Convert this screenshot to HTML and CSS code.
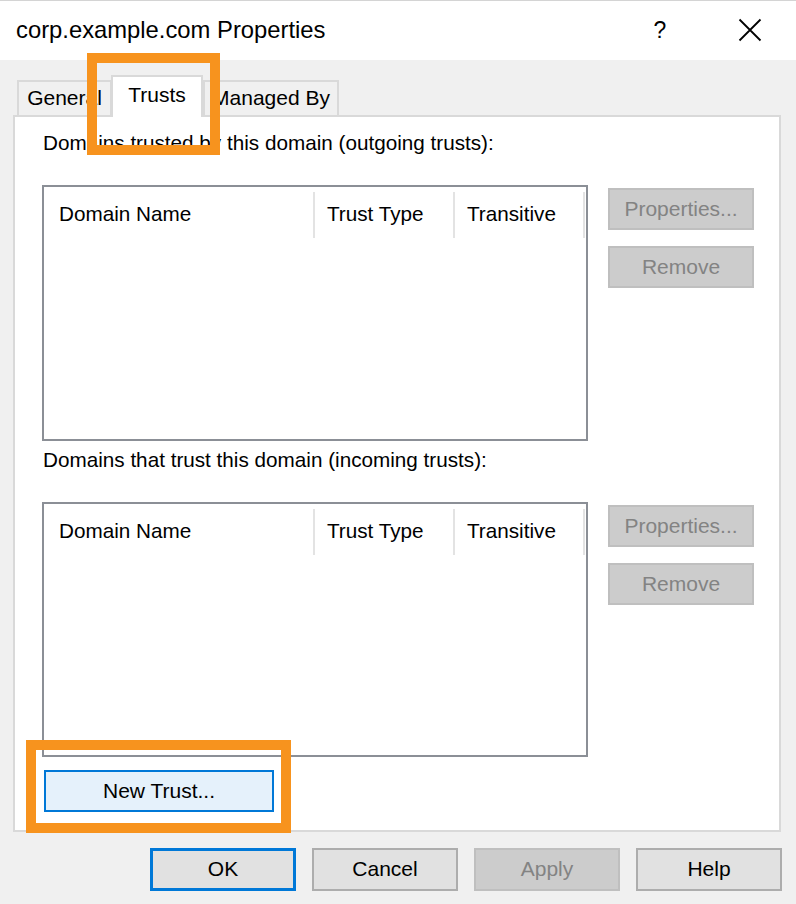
FILE: index.html
```html
<!DOCTYPE html>
<html lang="en">
<head>
<meta charset="utf-8">
<title>corp.example.com Properties</title>
<link rel="stylesheet" href="styles.css">
</head>
<body>
<div class="window">
  <header class="titlebar">
    <span class="title">corp.example.com Properties</span>
    <span class="help">?</span>
    <span class="close">
      <svg width="24" height="24" viewBox="0 0 24 24"><path d="M1.5 1.5 L22.5 22.5 M22.5 1.5 L1.5 22.5" stroke="#000" stroke-width="1.8" fill="none"/></svg>
    </span>
  </header>

  <div class="tabs">
    <div class="tab tab-general">General</div>
    <div class="tab tab-trusts active">Trusts</div>
    <div class="tab tab-managed">Managed By</div>
  </div>

  <section class="panel">
    <p class="label">Domains trusted by this domain (outgoing trusts):</p>
    <div class="list-row">
      <div class="listbox">
        <div class="list-header">
          <div class="col col-name">Domain Name</div>
          <div class="col col-type">Trust Type</div>
          <div class="col col-trans">Transitive</div>
        </div>
      </div>
      <div class="side-buttons">
        <button class="btn disabled">Properties...</button>
        <button class="btn disabled">Remove</button>
      </div>
    </div>

    <p class="label label-2">Domains that trust this domain (incoming trusts):</p>
    <div class="list-row list-row-2">
      <div class="listbox listbox-2">
        <div class="list-header">
          <div class="col col-name">Domain Name</div>
          <div class="col col-type">Trust Type</div>
          <div class="col col-trans">Transitive</div>
        </div>
      </div>
      <div class="side-buttons side-buttons-2">
        <button class="btn disabled">Properties...</button>
        <button class="btn disabled">Remove</button>
      </div>
    </div>

    <button class="btn new-trust">New Trust...</button>
  </section>

  <footer class="footer">
    <button class="btn default">OK</button>
    <button class="btn">Cancel</button>
    <button class="btn disabled">Apply</button>
    <button class="btn">Help</button>
  </footer>

  <div class="highlight hl-tab"></div>
  <div class="highlight hl-new"></div>
</div>
</body>
</html>
```

FILE: styles.css
```css
* { box-sizing: border-box; }

html, body {
  margin: 0;
  padding: 0;
}

body {
  width: 796px;
  height: 904px;
  background: #f0f0f0;
  font-family: "Liberation Sans", Arial, sans-serif;
  color: #000;
  overflow: hidden;
}

.window {
  position: relative;
  width: 796px;
  height: 904px;
  background: #f0f0f0;
}

.titlebar {
  height: 60px;
  background: #fff;
  border-top: 1px solid #d4d4d4;
  display: flex;
  align-items: center;
  padding-left: 16px;
  padding-bottom: 1px;
}

.title {
  font-size: 23.8px;
  flex: 1;
}

.help {
  font-size: 23px;
  width: 20px;
  margin-right: 68px;
  text-align: center;
}

.close {
  display: flex;
  width: 24px;
  height: 24px;
  margin-right: 34px;
}

.tabs {
  display: flex;
  align-items: flex-end;
  height: 57px;
  padding-left: 17px;
  position: relative;
  z-index: 2;
  margin-bottom: -2px;
}

.tab {
  font-size: 21px;
  display: flex;
  align-items: center;
  justify-content: center;
  border: 2px solid #d9d9d9;
  border-bottom: none;
  background: #f0f0f0;
  height: 35px;
  margin-bottom: 2px;
  padding-bottom: 1px;
}

.tab-general { width: 95px; }
.tab-managed { width: 136px; }

.tab-trusts {
  width: 92px;
  height: 42px;
  margin-left: -1px;
  margin-bottom: 0;
  background: #fff;
  padding-bottom: 4px;
  position: relative;
  z-index: 3;
}

.panel {
  position: relative;
  z-index: 1;
  margin-left: 13px;
  width: 768px;
  height: 717px;
  background: #fff;
  border: 2px solid #d9d9d9;
  padding: 14px 0 0 27px;
}

.label {
  margin: 0 0 0 1px;
  font-size: 20.7px;
  line-height: 24px;
  height: 24px;
}

.label-2 {
  margin-top: 7px;
}

.list-row {
  display: flex;
  margin-top: 30px;
  height: 256px;
}

.list-row-2 {
  height: 255px;
}

.listbox {
  width: 546px;
  height: 100%;
  border: 2px solid #8b8f96;
  background: #fff;
}

.list-header {
  display: flex;
  padding-top: 5px;
}

.col {
  height: 46px;
  display: flex;
  align-items: center;
  font-size: 20.7px;
  border-right: 2px solid #e3e3e3;
  padding-left: 12px;
  padding-bottom: 2px;
}

.col-name { width: 271px; padding-left: 15px; }
.col-type { width: 140px; }
.col-trans { width: 130px; }

.side-buttons {
  display: flex;
  flex-direction: column;
  gap: 16px;
  margin-left: 20px;
  padding-top: 3px;
}

.btn {
  font-family: "Liberation Sans", Arial, sans-serif;
  font-size: 21px;
  color: #000;
  width: 146px;
  height: 43px;
  background: #e1e1e1;
  border: 2px solid #adadad;
  padding: 0 0 1px 0;
  margin: 0;
  display: flex;
  align-items: center;
  justify-content: center;
}

.side-buttons .btn {
  height: 42px;
}

.btn.disabled {
  background: #cccccc;
  border-color: #bfbfbf;
  color: #838383;
}

.btn.default {
  border: 3px solid #0078d7;
}

.new-trust {
  margin-top: 13px;
  margin-left: 2px;
  width: 230px;
  height: 42px;
  background: #e5f1fb;
  border: 2px solid #0078d7;
}

.footer {
  display: flex;
  justify-content: flex-end;
  gap: 16px;
  padding-right: 14px;
  margin-top: 16px;
}

.highlight {
  position: absolute;
  border: 10px solid #f7931e;
  z-index: 10;
  pointer-events: none;
}

.hl-tab {
  left: 87px;
  top: 53px;
  width: 133px;
  height: 102px;
}

.hl-new {
  left: 26px;
  top: 740px;
  width: 265px;
  height: 93px;
}
```
